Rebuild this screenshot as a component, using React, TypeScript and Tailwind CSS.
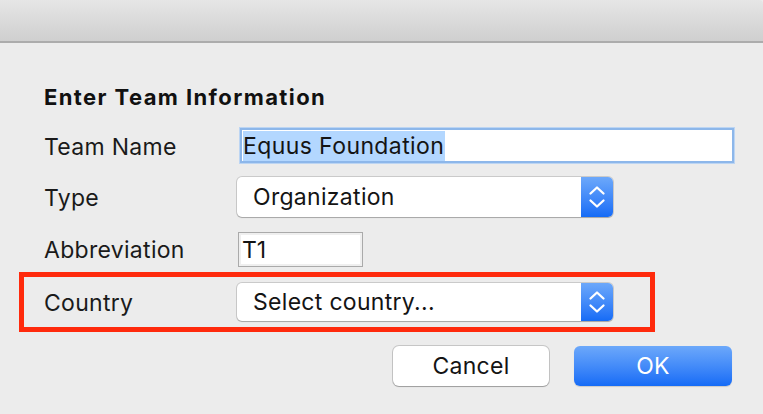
import React from "react";

function Stepper() {
  return (
    <div className="flex h-full w-[32px] flex-col items-center justify-center rounded-r-[5px] bg-gradient-to-b from-[#6ca8fa] to-[#146bf6]">
      <svg width="18" height="26" viewBox="0 0 18 26" fill="none">
        <path d="M2.5 9.5 L9 3.5 L15.5 9.5" stroke="white" strokeWidth="2.3" strokeLinecap="round" strokeLinejoin="round" />
        <path d="M2.5 16.5 L9 22.5 L15.5 16.5" stroke="white" strokeWidth="2.3" strokeLinecap="round" strokeLinejoin="round" />
      </svg>
    </div>
  );
}

function Select({ label, h }: { label: string; h: string }) {
  return (
    <div className={`flex w-[376px] ${h} items-stretch rounded-[5px] bg-white shadow-[0_0_0_1px_rgba(0,0,0,0.14),0_1px_1px_rgba(0,0,0,0.18)]`}>
      <div className="flex flex-1 items-center pl-[16px] pt-[1px] text-[23px] tracking-[0.3px] text-[#141414]">{label}</div>
      <Stepper />
    </div>
  );
}

export default function App() {
  return (
    <div
      className="flex h-[414px] w-[763px] flex-col overflow-hidden bg-[#ececec] text-[#1a1a1a]"
      style={{ fontFamily: "Inter, 'Liberation Sans', sans-serif" }}
    >
      <div className="h-[41px] shrink-0 rounded-tr-[4px] bg-gradient-to-b from-[#e6e6e6] to-[#cfcfcf]" />
      <div className="h-[2px] shrink-0 bg-[#acacac]" />

      <div className="mt-[40px] flex h-[28px] items-center pl-[44px] pt-[1px] text-[22px] font-bold tracking-[1.4px] text-[#111]">
        Enter Team Information
      </div>

      <div className="mt-[17px] flex h-[35px] items-center">
        <div className="w-[240px] pl-[44px] pt-[3px] text-[23px] tracking-[0.3px]">Team Name</div>
        <div className="flex h-[35px] w-[494px] items-center border-[2px] border-[#8db7ea] bg-white pl-[1px] shadow-[0_0_0_1px_#bcd5f3]">
          <span className="flex h-[30px] items-center bg-[#b3d7ff] pr-[1px] pt-[2px] text-[23px] tracking-[0.4px] text-[#141414]">Equus Foundation</span>
        </div>
      </div>

      <div className="mt-[14px] flex h-[40px] items-center">
        <div className="w-[237px] pl-[44px] pt-[2px] text-[23px] tracking-[0.3px]">Type</div>
        <Select label="Organization" h="h-[40px]" />
      </div>

      <div className="mt-[15px] flex h-[35px] items-center">
        <div className="w-[238px] pl-[44px] pt-[2px] text-[23px] tracking-[0.3px]">Abbreviation</div>
        <div className="flex h-[35px] w-[125px] items-center border border-[#aaaaaa] bg-white pl-[3px] pt-[1px] shadow-[inset_0_0_0_2px_#efefef] text-[23px] text-[#141414]">
          T1
        </div>
      </div>

      <div className="ml-[19px] mt-[5px] flex h-[60px] w-[636px] items-center border-[5px] border-[#ff2a0c]">
        <div className="w-[213px] pl-[20px] pt-[2px] text-[23px] tracking-[0.3px]">Country</div>
        <Select label="Select country..." h="h-[38px]" />
      </div>

      <div className="mt-[14px] flex h-[40px] items-center">
        <button className="ml-[393px] flex h-[40px] w-[156px] items-center justify-center rounded-[6px] bg-white pt-[1px] text-[23px] tracking-[0.3px] text-[#141414] shadow-[0_0_0_1px_rgba(0,0,0,0.16),0_1px_1px_rgba(0,0,0,0.2)]">
          Cancel
        </button>
        <button className="ml-[25px] flex h-[40px] w-[158px] items-center justify-center rounded-[6px] bg-gradient-to-b from-[#6ca8fa] to-[#146bf6] pt-[1px] text-[23px] tracking-[0.3px] text-white shadow-[0_1px_1px_rgba(0,0,0,0.15)]">
          OK
        </button>
      </div>
    </div>
  );
}
